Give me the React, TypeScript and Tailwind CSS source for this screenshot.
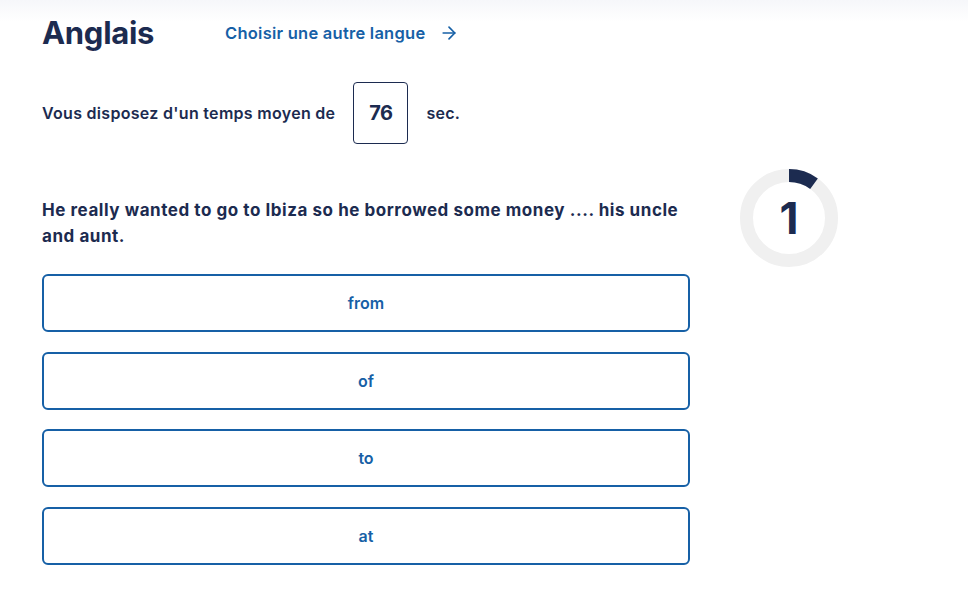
import { ArrowRight } from "lucide-react";

const answers = ["from", "of", "to", "at"];

function ProgressRing({ current, total }: { current: number; total: number }) {
  const r = 42.5;
  const c = 2 * Math.PI * r;
  const done = (current / total) * c;
  return (
    <div className="relative w-[98px] h-[98px]">
      <svg width="98" height="98" viewBox="0 0 98 98" className="-rotate-90">
        <circle cx="49" cy="49" r={r} fill="none" stroke="#f0f0f0" strokeWidth="13" />
        <circle
          cx="49"
          cy="49"
          r={r}
          fill="none"
          stroke="#1c2b50"
          strokeWidth="13"
          strokeDasharray={`${done} ${c}`}
        />
      </svg>
      <div className="absolute inset-0 flex items-center justify-center text-[44px] font-bold text-[#1c2b50] leading-none">
        {current}
      </div>
    </div>
  );
}

export default function App() {
  return (
    <div
      className="min-h-[608px] bg-gradient-to-b from-[#f6f7fa] to-white to-[22px] text-[#1c2b50]"
      style={{ fontFamily: "Inter, 'Open Sans', sans-serif" }}
    >
      <div className="flex pl-[42px] pt-[14px]">
        <div className="w-[648px]">
          {/* --- Header --- */}
          <div className="flex items-center h-[38px]">
            <h1 className="text-[31px] font-bold tracking-[-0.3px] w-[183px]">Anglais</h1>
            <a className="flex items-center gap-[14px] text-[16.5px] font-semibold tracking-[0.25px] text-[#1660a6]">
              Choisir une autre langue
              <ArrowRight size={20} strokeWidth={2} />
            </a>
          </div>

          <div className="flex items-center mt-[30px] text-[16px] tracking-[0.3px] font-semibold">
            <span>Vous disposez d'un temps moyen de</span>
            <div className="ml-[18px] w-[55px] h-[62px] border border-[#1c2b50] rounded-[4px] flex items-center justify-center text-[20px] tracking-[-0.5px] font-bold">
              76
            </div>
            <span className="ml-[18px]">sec.</span>
          </div>

          {/* --- Question --- */}
          <p className="mt-[53px] text-[17px] tracking-[0.55px] font-bold leading-[26px]">
            He really wanted to go to Ibiza so he borrowed some money .... his uncle and aunt.
          </p>

          <div className="mt-[25px] flex flex-col gap-[19.5px]">
            {answers.map((a) => (
              <button
                key={a}
                className="h-[58px] w-full border-2 border-[#1660a6] rounded-[6px] text-[16px] font-semibold text-[#1660a6] bg-white"
              >
                {a}
              </button>
            ))}
          </div>
        </div>

        <div className="ml-[50px] mt-[155px]">
          <ProgressRing current={1} total={10} />
        </div>
      </div>
    </div>
  );
}
